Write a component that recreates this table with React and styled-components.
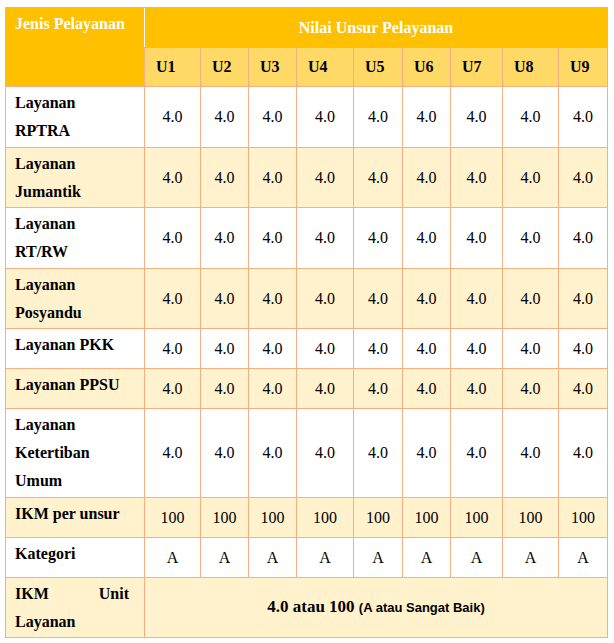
import React from 'react';
import styled, { createGlobalStyle } from 'styled-components';

const GlobalStyle = createGlobalStyle`
  html, body {
    margin: 0;
    padding: 0;
    background: #ffffff;
  }
`;

const Page = styled.div`
  padding: 7px 0 0 5px;
`;

const Table = styled.table`
  width: 602px;
  table-layout: fixed;
  border-collapse: collapse;
  font-family: "Liberation Serif", "Times New Roman", serif;
  font-size: 16px;
  color: #000;
`;

const Col = styled.col`
  width: ${(p) => p.$w}px;
`;

const TopHead = styled.th`
  background: #ffc000;
  color: #ffffff;
  font-weight: bold;
  line-height: 28px;
  border: 1px solid #ffc000;
`;

const JenisHead = styled(TopHead)`
  text-align: left;
  vertical-align: top;
  padding: 2px 9px 2px 9px;
  border-right: none;
  border-bottom: 1px solid #f4b083;
`;

const NilaiHead = styled(TopHead)`
  text-align: center;
  vertical-align: middle;
  padding: 6px 0 5px;
  border-left: 1px solid #ffffff;
`;

const UnitHead = styled.th`
  background: #ffd966;
  font-weight: bold;
  text-align: left;
  line-height: 28px;
  padding: 5px 0 5px 11px;
  border: 1px solid #f4b083;
`;

const Row = styled.tr`
  background: ${(p) => (p.$shade ? '#fff2cc' : '#ffffff')};
`;

const Label = styled.td`
  font-weight: bold;
  text-align: left;
  vertical-align: top;
  line-height: 28px;
  padding: 2px 15px 1.5px 9px;
  border: 1px solid #f4b083;
`;

const Value = styled.td`
  text-align: center;
  vertical-align: middle;
  line-height: 28px;
  padding: 6px 0 5px;
  border: 1px solid #f4b083;
`;

const JustifiedLine = styled.span`
  display: block;
  text-align: justify;
  text-align-last: justify;
`;

const Summary = styled.td`
  text-align: center;
  vertical-align: middle;
  font-size: 17px;
  font-weight: bold;
  border: 1px solid #f4b083;
`;

const Note = styled.span`
  font-family: "Liberation Sans", Arial, sans-serif;
  font-size: 13px;
  font-weight: bold;
`;

const widths = [139, 56, 48, 48, 57, 49, 48, 52, 56, 49];
const units = ['U1', 'U2', 'U3', 'U4', 'U5', 'U6', 'U7', 'U8', 'U9'];

const services = [
  ['Layanan', 'RPTRA'],
  ['Layanan', 'Jumantik'],
  ['Layanan', 'RT/RW'],
  ['Layanan', 'Posyandu'],
  ['Layanan PKK'],
  ['Layanan PPSU'],
  ['Layanan', 'Ketertiban', 'Umum'],
];

function LabelLines({ lines }) {
  return lines.map((line, i) => (
    <React.Fragment key={i}>
      {i > 0 && <br />}
      {line}
    </React.Fragment>
  ));
}

export default function App() {
  return (
    <>
      <GlobalStyle />
      <Page>
        <Table>
          <colgroup>
            {widths.map((w, i) => (
              <Col key={i} $w={w} />
            ))}
          </colgroup>
          <thead>
            <tr>
              <JenisHead rowSpan={2}>Jenis Pelayanan</JenisHead>
              <NilaiHead colSpan={9}>Nilai Unsur Pelayanan</NilaiHead>
            </tr>
            <tr>
              {units.map((u) => (
                <UnitHead key={u}>{u}</UnitHead>
              ))}
            </tr>
          </thead>
          <tbody>
            {services.map((lines, i) => (
              <Row key={i} $shade={i % 2 === 1}>
                <Label>
                  <LabelLines lines={lines} />
                </Label>
                {units.map((u) => (
                  <Value key={u}>4.0</Value>
                ))}
              </Row>
            ))}
            <Row $shade>
              <Label>IKM per unsur</Label>
              {units.map((u) => (
                <Value key={u}>100</Value>
              ))}
            </Row>
            <Row>
              <Label>Kategori</Label>
              {units.map((u) => (
                <Value key={u}>A</Value>
              ))}
            </Row>
            <Row $shade>
              <Label>
                <JustifiedLine>IKM Unit</JustifiedLine>
                Layanan
              </Label>
              <Summary colSpan={9}>
                4.0 atau 100 <Note>(A atau Sangat Baik)</Note>
              </Summary>
            </Row>
          </tbody>
        </Table>
      </Page>
    </>
  );
}
